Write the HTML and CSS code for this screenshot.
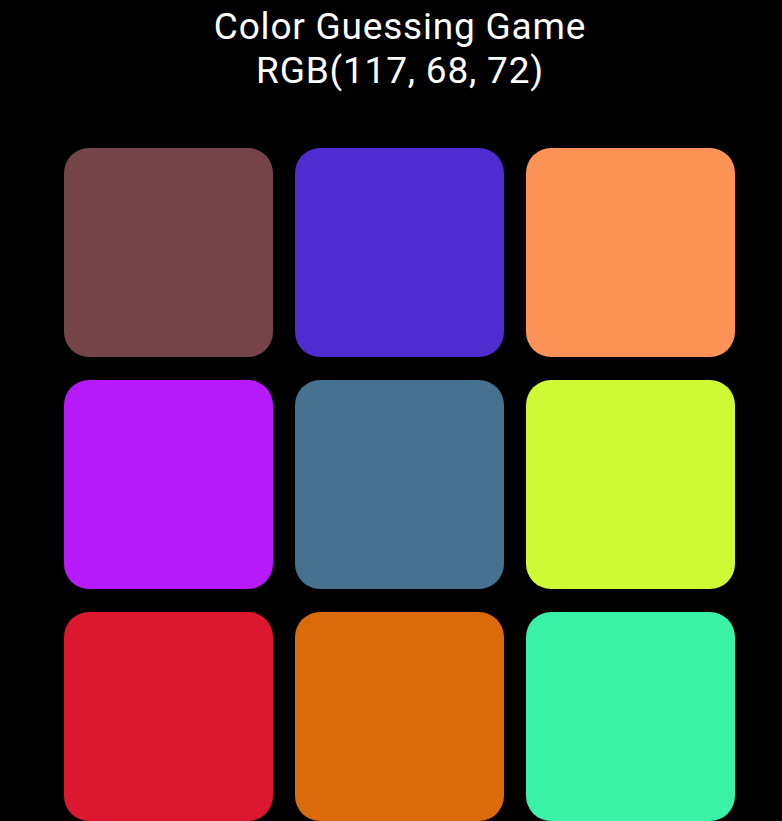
FILE: index.html
```html
<!DOCTYPE html>
<html lang="en">
<head>
<meta charset="utf-8">
<title>Color Guessing Game</title>
<link rel="stylesheet" href="styles.css">
</head>
<body>
<div class="app">
  <header class="header">
    <h1 class="title">Color Guessing Game</h1>
    <p class="target">RGB(117, 68, 72)</p>
  </header>
  <div class="grid">
    <div class="tile" style="background: rgb(117, 68, 72)"></div>
    <div class="tile" style="background: rgb(79, 44, 207)"></div>
    <div class="tile" style="background: rgb(255, 146, 87)"></div>
    <div class="tile" style="background: rgb(184, 27, 251)"></div>
    <div class="tile" style="background: rgb(70, 113, 143)"></div>
    <div class="tile" style="background: rgb(208, 249, 53)"></div>
    <div class="tile" style="background: rgb(220, 24, 48)"></div>
    <div class="tile" style="background: rgb(218, 106, 10)"></div>
    <div class="tile" style="background: rgb(58, 242, 166)"></div>
  </div>
</div>
</body>
</html>
```

FILE: styles.css
```css
html, body {
  margin: 0;
  padding: 0;
  background: #000;
}

.app {
  width: 800px;
  padding-top: 5px;
  font-family: Roboto, "Noto Sans", sans-serif;
  color: #fff;
}

.header {
  text-align: center;
}

.title,
.target {
  margin: 0;
  font-size: 37px;
  font-weight: 400;
  letter-spacing: 0.8px;
  line-height: 43.5px;
}

.grid {
  display: grid;
  grid-template-columns: repeat(3, 209px);
  grid-auto-rows: 209px;
  column-gap: 22px;
  row-gap: 23px;
  margin-top: 56px;
  padding-left: 64px;
}

.tile {
  border-radius: 25px;
}
```
